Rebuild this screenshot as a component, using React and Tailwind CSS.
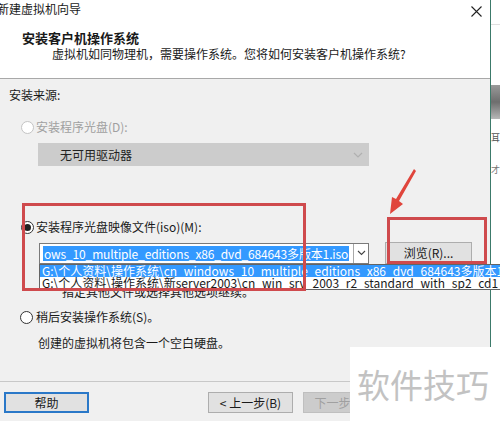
import React from 'react';

const FONT = "font-['Noto_Sans_CJK_SC','Noto_Sans',sans-serif]";

function Radio({ checked, disabled }) {
  return (
    <span
      className={`inline-flex items-center justify-center w-[13px] h-[13px] rounded-full border bg-white ${
        disabled ? 'border-[#c4c4c4]' : 'border-[#333333]'
      }`}
    >
      {checked && <span className="w-[7px] h-[7px] rounded-full bg-[#222222]" />}
    </span>
  );
}

function Button({ children, className = '' }) {
  return (
    <div
      className={`h-[21px] flex items-center justify-center text-[12px] leading-[14px] border ${className}`}
    >
      {children}
    </div>
  );
}

export default function App() {
  return (
    <div className={`relative w-[500px] h-[421px] overflow-hidden flex bg-white text-[#1a1a1a] ${FONT}`}>
      {/* wizard dialog */}
      <div className="w-[491px] h-full flex flex-col border-r border-[#3c7a6a]">
        {/* title + header */}
        <div className="h-[79px] bg-white border-b border-[#a8a8a8] flex flex-col">
          <div className="h-[24px] flex items-start justify-between pt-[2px]">
            <span className="text-[12px] leading-[14px] -ml-[3px]">新建虚拟机向导</span>
            <svg width="11" height="11" viewBox="0 0 11 11" className="mt-[4px] mr-[8px]">
              <path d="M0.5 0.5 L10.5 10.5 M10.5 0.5 L0.5 10.5" stroke="#222" strokeWidth="1.1" />
            </svg>
          </div>
          <div className="pl-[22px] pt-[6px] text-[13px] leading-[16px] font-bold">安装客户机操作系统</div>
          <div className="pl-[52px] pt-[1px] text-[12px] leading-[14px]">
            虚拟机如同物理机，需要操作系统。您将如何安装客户机操作系统?
          </div>
        </div>

        {/* body */}
        <div className="flex-1 bg-[#f0f0f0] flex flex-col">
          <div className="pl-[9px] pt-[9px] text-[12px] leading-[14px]">安装来源:</div>

          <div className="pl-[21px] pt-[18px] flex items-center gap-[2px] text-[12px] leading-[14px] text-[#a0a0a0]">
            <Radio disabled />
            <span>安装程序光盘(D):</span>
          </div>

          <div className="ml-[38px] mt-[9px] w-[331px] h-[23px] bg-[#cccccc] flex items-center justify-between pl-[22px] pr-[6px]">
            <span className="text-[12px] leading-[14px] text-[#222]">无可用驱动器</span>
            <svg width="10" height="6" viewBox="0 0 10 6">
              <path d="M1 1 L5 5 L9 1" fill="none" stroke="#b0b0b0" strokeWidth="1.2" />
            </svg>
          </div>

          <div className="pl-[21px] pt-[54px] flex items-center gap-[2px] text-[12px] leading-[14px]">
            <Radio checked />
            <span>安装程序光盘映像文件(iso)(M):</span>
          </div>

          <div className="flex items-center mt-[8px]">
            <div className="ml-[39px] w-[330px] h-[21px] bg-white border border-[#7a7a7a] flex">
              <div className="flex-1 overflow-hidden flex items-center pl-[3px]">
                <span className="bg-[#3399ff] text-white text-[12px] leading-[15px] tracking-[-0.15px] whitespace-nowrap px-[1px]">
                  ows_10_multiple_editions_x86_dvd_684643多版本1.iso
                </span>
              </div>
              <div className="w-[15px] border-l border-[#a8a8a8] flex items-center justify-center">
                <svg width="9" height="6" viewBox="0 0 9 6">
                  <path d="M1 1 L4.5 4.5 L8 1" fill="none" stroke="#444" strokeWidth="1.1" />
                </svg>
              </div>
            </div>
            <Button className="ml-[16px] w-[87px] h-[22px] bg-[#e1e1e1] border-[#adadad]">浏览(R)...</Button>
          </div>

          <div className="pl-[62px] pt-[21px] text-[12px] leading-[14px]">指定其他文件或选择其他选项继续。</div>

          <div className="pl-[20px] pt-[11px] flex items-center gap-[3px] text-[12px] leading-[14px]">
            <Radio />
            <span>稍后安装操作系统(S)。</span>
          </div>
          <div className="pl-[38px] pt-[12px] text-[12px] leading-[14px]">创建的虚拟机将包含一个空白硬盘。</div>

          <div className="mt-[31px] border-t border-[#c8c8c8]" />

          <div className="flex items-center pt-[10px]">
            <Button className="ml-[4px] w-[85px] bg-[#e1e1e1] border-2 border-[#2a78c8]">帮助</Button>
            <Button className="ml-[119px] w-[85px] bg-[#e1e1e1] border-[#adadad]">&lt; 上一步(B)</Button>
            <Button className="ml-[10px] w-[85px] bg-[#cccccc] border-[#bfbfbf] text-[#a0a0a0]">下一步(N) &gt;</Button>
          </div>
        </div>
      </div>

      {/* neighbouring window strip */}
      <div className="flex-1 flex flex-col bg-white">
        <div className="h-[25px] border-b border-[#e0e0e0]" />
        <div className="h-[60px]" />
        <div className="h-[34px] bg-gradient-to-b from-[#9a9a9a] via-[#6e6e6e] to-[#b8b8b8]" />
        <div className="h-[14px]" />
        <div className="text-[9px] leading-[10px] text-[#555]">耳</div>
        <div className="h-[22px]" />
        <div className="text-[9px] leading-[10px] text-[#777]">才</div>
      </div>

      {/* dropdown list of the iso combobox */}
      <div className="absolute left-[39px] top-[264px] w-[480px] bg-white border border-[#646464] text-[12px] leading-[12px] whitespace-nowrap overflow-hidden">
        <div className="bg-[#3399ff] text-white pl-[2px] h-[12px]">
          G:\个人资料\操作系统\cn_windows_10_multiple_editions_x86_dvd_684643多版本1.iso
        </div>
        <div className="pl-[2px] h-[12px]">
          G:\个人资料\操作系统\新server2003\cn_win_srv_2003_r2_standard_with_sp2_cd1_X14-26936.iso
        </div>
      </div>

      {/* red highlight boxes */}
      <div className="absolute left-[22px] top-[203px] w-[284px] h-[88px] border-[3px] border-[#cf4a4d]" />
      <div className="absolute left-[387px] top-[217px] w-[100px] h-[47px] border-[3px] border-[#cf4a4d]" />

      {/* red arrow */}
      <svg className="absolute left-[385px] top-[168px]" width="34" height="50" viewBox="0 0 34 50">
        <polygon points="29,1 31,3 14,33 18,36 5,46 7,29 11,31" fill="#e0453c" />
      </svg>

      {/* watermark */}
      <div className="absolute left-[350px] top-[347px] w-[150px] h-[74px] bg-white flex items-center pl-[7px] overflow-hidden">
        <span className="text-[33px] leading-[40px] text-[#c2c2c2] whitespace-nowrap">软件技巧</span>
      </div>
    </div>
  );
}
